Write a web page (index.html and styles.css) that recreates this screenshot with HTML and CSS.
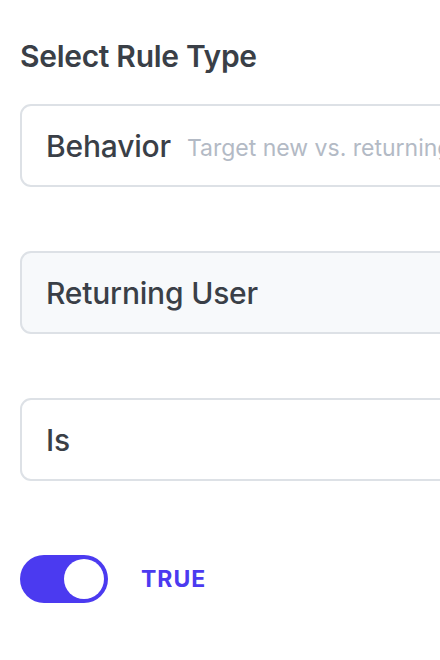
FILE: index.html
```html
<!DOCTYPE html>
<html>
<head>
<meta charset="utf-8">
<link rel="stylesheet" href="styles.css">
</head>
<body>
<div class="page">
  <h1 class="title">Select Rule Type</h1>
  <div class="field">
    <span class="value">Behavior</span>
    <span class="hint">Target new vs. returning users</span>
  </div>
  <div class="field field-muted">
    <span class="value">Returning User</span>
  </div>
  <div class="field">
    <span class="value">Is</span>
  </div>
  <div class="toggle-row">
    <div class="toggle"><div class="knob"></div></div>
    <span class="toggle-label">TRUE</span>
  </div>
</div>
</body>
</html>
```

FILE: styles.css
```css
html, body {
  margin: 0;
  padding: 0;
  background: #ffffff;
  overflow: hidden;
}
.page {
  width: 560px;
  padding: 36px 0 0 20px;
  font-family: Inter, "Noto Sans", sans-serif;
  color: #3a3f47;
  display: flex;
  flex-direction: column;
}
.title {
  margin: 0;
  font-size: 30px;
  line-height: 40px;
  font-weight: 600;
  letter-spacing: -0.3px;
  color: #3a3f47;
}
.field {
  margin-top: 28px;
  height: 83px;
  box-sizing: border-box;
  border: 2px solid #dde1e6;
  border-radius: 11px;
  background: #ffffff;
  display: flex;
  align-items: center;
  padding-left: 24px;
  gap: 16px;
  white-space: nowrap;
}
.field + .field {
  margin-top: 64px;
}
.field-muted {
  background: #f7f9fb;
}
.value {
  font-size: 30px;
  font-weight: 500;
  letter-spacing: -0.2px;
  color: #3a3f47;
}
.hint {
  font-size: 23px;
  font-weight: 400;
  color: #b3bac5;
  padding-top: 4px;
}
.toggle-row {
  margin-top: 74px;
  display: flex;
  align-items: center;
  gap: 33px;
}
.toggle {
  width: 88px;
  height: 48px;
  border-radius: 24px;
  background: #4b3af0;
  box-sizing: border-box;
  padding: 4px;
  display: flex;
  justify-content: flex-end;
}
.knob {
  width: 40px;
  height: 40px;
  border-radius: 50%;
  background: #ffffff;
}
.toggle-label {
  font-size: 23px;
  font-weight: 700;
  letter-spacing: 1px;
  color: #4b3af0;
}
```
